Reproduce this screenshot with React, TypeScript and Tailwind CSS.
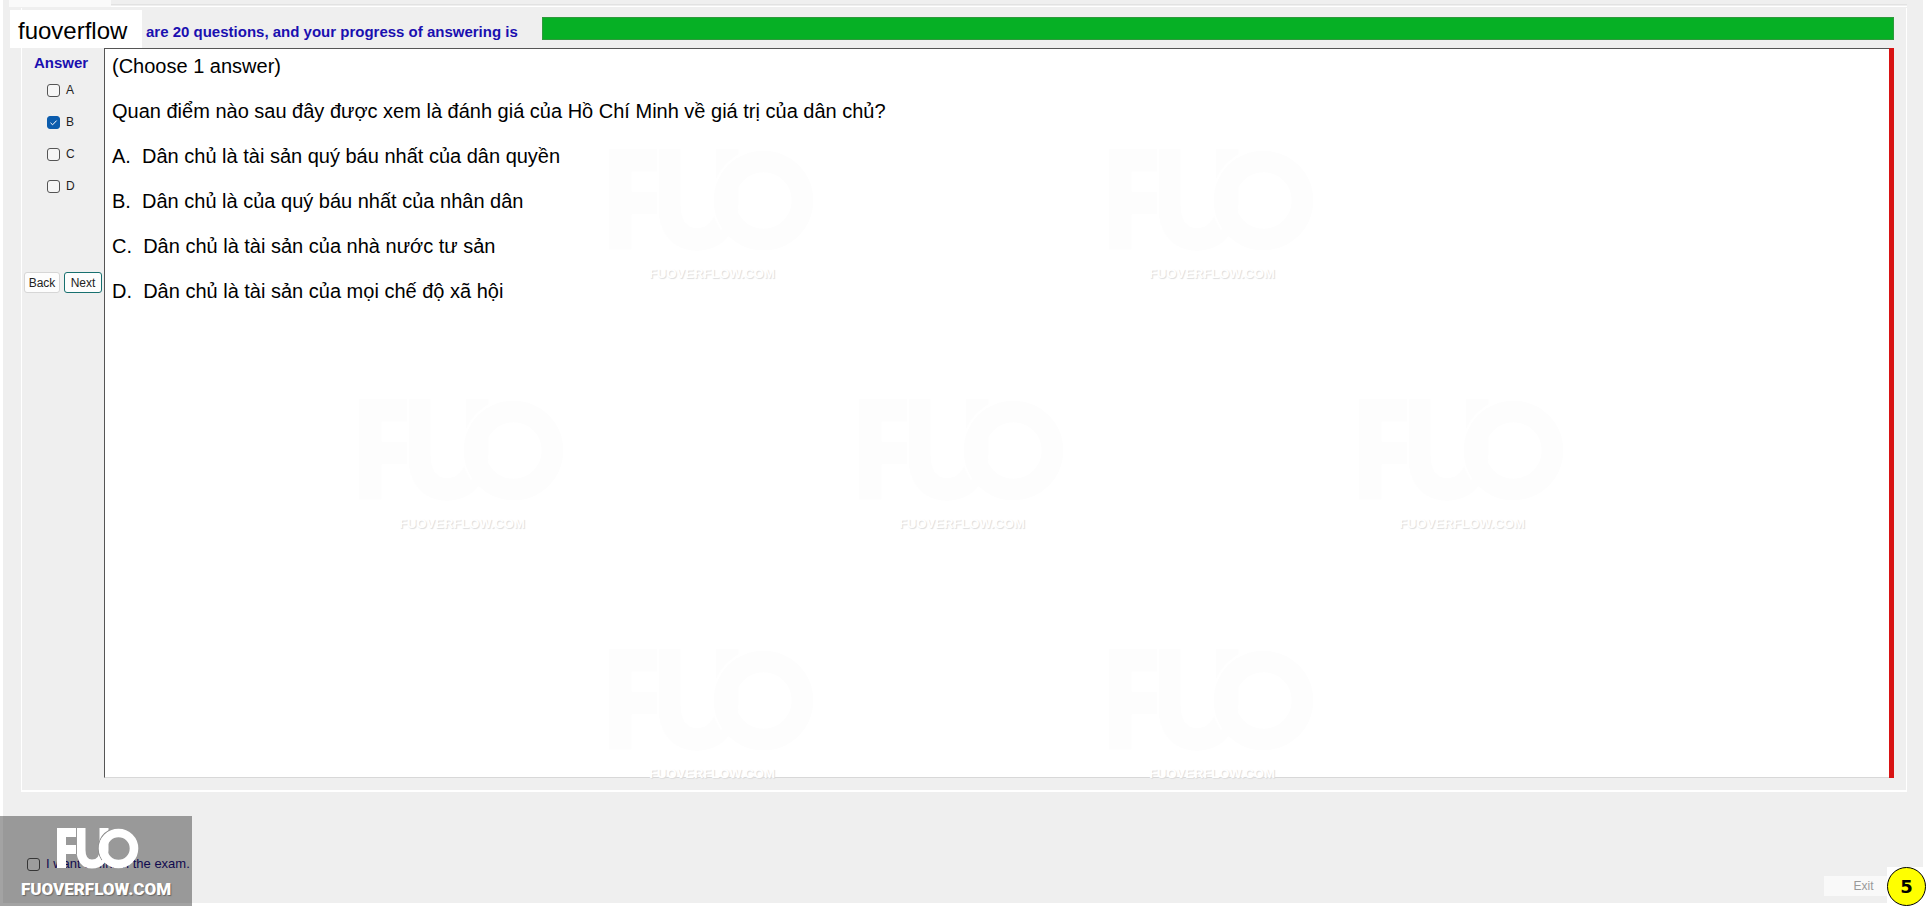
import React from 'react';

const options = [
  { id: 'A', text: 'Dân chủ là tài sản quý báu nhất của dân quyền', checked: false },
  { id: 'B', text: 'Dân chủ là của quý báu nhất của nhân dân', checked: true },
  { id: 'C', text: 'Dân chủ là tài sản của nhà nước tư sản', checked: false },
  { id: 'D', text: 'Dân chủ là tài sản của mọi chế độ xã hội', checked: false },
];

// Faint marks scattered over the question sheet
const watermarks = [
  'left-[502px] top-[100px]',
  'left-[1002px] top-[100px]',
  'left-[252px] top-[350px]',
  'left-[752px] top-[350px]',
  'left-[1252px] top-[350px]',
  'left-[502px] top-[600px]',
  'left-[1002px] top-[600px]',
];

const checkboxClass =
  'size-[13px] shrink-0 appearance-none rounded-[3px] border border-[#555] bg-[#f6f6f6] checked:border-[#0b5cad] checked:bg-[#0b5cad]';

const FuoMark: React.FC<{ className?: string; edge: string }> = ({ className, edge }) => (
  <svg viewBox="0 0 82 41" fill="none" stroke="currentColor" className={className} aria-hidden="true">
    <path d="M4.5 40V4.5H19M4.5 21.5H19" strokeWidth="9" />
    <path d="M24 0V22C24 31 28 36 35 36C42 36 47 31 47 22V0" strokeWidth="9" />
    <path d="M19.5 0V26" stroke={edge} strokeWidth="0.8" />
    <path d="M45 32A20.5 20.5 0 0 1 52 2.5" stroke={edge} strokeWidth="1.2" />
    <circle cx="61.5" cy="20.5" r="15.5" strokeWidth="8.6" />
  </svg>
);

const App: React.FC = () => {
  return (
    <div className="relative overflow-hidden font-['Liberation_Sans',Arial,sans-serif] text-black">
      <div className="flex min-h-screen flex-col border-x-[3px] border-b-[3px] border-white bg-[#efefef]">
        <div className="flex h-2 items-start pl-[6px]">
          <div className="h-[7px] w-[102px] bg-[#fafafa]" />
          <div className="mt-1 mr-4 h-[3px] flex-1 border-y border-t-[#e2e2e2] border-b-white" />
        </div>

        <main className="ml-[18px] mr-4 flex flex-col border-x border-b-2 border-white pb-3">
          <header className="flex h-10 items-start pr-3">
            <div className="relative z-10 -ml-3 mt-[2px] flex h-[38px] w-[132px] shrink-0 items-center bg-white pt-1 pl-2 text-2xl">
              fuoverflow
            </div>
            <p className="ml-1 mt-4 shrink-0 text-[15px] leading-4 font-bold whitespace-nowrap text-[#1a0fb0]">
              are 20 questions, and your progress of answering is
            </p>
            <div
              role="progressbar"
              aria-label="Answering progress"
              aria-valuenow={100}
              className="ml-6 mt-[9px] h-[23px] flex-1 border border-[#2f9a3c] bg-[#06b025]"
            />
          </header>

          <div className="flex pr-3">
            <aside className="flex w-[82px] shrink-0 flex-col">
              <h2 className="mt-[7px] pl-3 text-[15px] leading-4 font-bold text-[#1a0fb0]">Answer</h2>
              <div className="mt-[11px] flex flex-col gap-4 pl-[25px]">
                {options.map((option) => (
                  <label key={option.id} className="flex h-4 items-center gap-[6px] text-xs text-[#222]">
                    <span className="relative flex">
                      <input type="checkbox" defaultChecked={option.checked} className={checkboxClass} />
                      {option.checked && (
                        <svg viewBox="0 0 13 13" fill="none" stroke="white" className="pointer-events-none absolute inset-0">
                          <path d="M3.5 6.8L5.6 8.8L9.6 4.6" />
                        </svg>
                      )}
                    </span>
                    {option.id}
                  </label>
                ))}
              </div>
              <div className="mt-[78px] flex gap-1 pl-[2px] text-xs text-[#222]">
                <button type="button" className="h-[21px] w-9 rounded-[3px] border border-[#d6d6d6] bg-[#fdfdfd]">
                  Back
                </button>
                <button type="button" className="h-[21px] w-[38px] rounded-[3px] border border-[#17706f] bg-[#fdfdfd]">
                  Next
                </button>
              </div>
            </aside>

            <section className="relative flex min-h-[730px] flex-1 flex-col gap-[22px] border-t border-b border-l border-t-[#555] border-b-[#d8d8d8] border-l-[#555] bg-white pt-[6px] pl-[7px] text-xl leading-[23px]">
              {watermarks.map((place) => (
                <div key={place} className={`absolute flex w-[210px] flex-col items-center ${place}`}>
                  <FuoMark className="w-[206px] text-[#fdfdfd]" edge="#ffffff" />
                  <span className="mt-[14px] text-[13px] leading-4 font-bold text-white [text-shadow:1px_1px_1px_#ddd]">
                    FUOVERFLOW.COM
                  </span>
                </div>
              ))}
              <p className="relative">(Choose 1 answer)</p>
              <p className="relative">Quan điểm nào sau đây được xem là đánh giá của Hồ Chí Minh về giá trị của dân chủ?</p>
              {options.map((option) => (
                <p key={option.id} className="relative whitespace-pre">
                  {option.id}.{'  '}
                  {option.text}
                </p>
              ))}
            </section>
            <div className="w-[5px] bg-[#d81313]" />
          </div>
        </main>

        <footer className="flex flex-1 items-end justify-between pb-[7px] pl-6">
          <label className="mb-6 flex items-center gap-[6px] text-[13px] leading-4 text-[#1a0f7c]">
            <input type="checkbox" className={checkboxClass} />I want to finish the exam.
          </label>
          <button type="button" disabled className="mr-9 h-5 w-[63px] bg-[#f9f9f9] pl-4 text-xs text-[#999]">
            Exit
          </button>
        </footer>
      </div>

      <div className="pointer-events-none absolute bottom-0 left-0 flex h-[90px] w-48 flex-col items-center bg-black/36 pt-3 text-white">
        <FuoMark className="ml-1 w-[82px]" edge="#8c8c8c" />
        <span className="mt-1 font-['Roboto',sans-serif] text-[17px] leading-8 font-black [text-shadow:1px_1px_1px_#666]">
          FUOVERFLOW.COM
        </span>
      </div>

      <div className="absolute right-0 bottom-0 flex bg-white">
        <div className="flex size-[39px] items-center justify-center rounded-full border border-black bg-[#ffff00] font-['DejaVu_Sans',sans-serif] text-lg font-bold">
          5
        </div>
      </div>
    </div>
  );
};

export default App;
